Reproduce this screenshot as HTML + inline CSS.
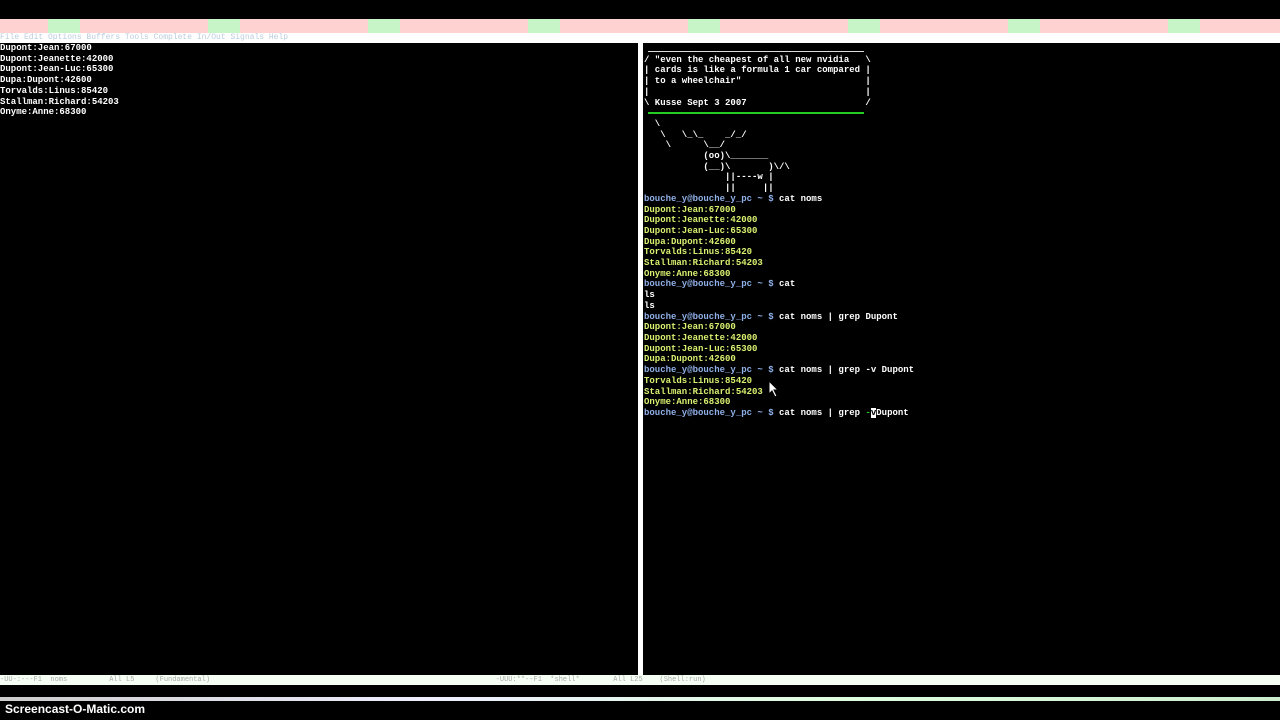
<!DOCTYPE html>
<html><head><style>
body{margin:0;width:1280px;height:720px;background:#000;overflow:hidden;position:relative;font-family:"Liberation Mono",monospace;}
.stripe{position:absolute;top:19px;left:0;width:1280px;height:14px;background:repeating-linear-gradient(90deg,#ffd2d2 0 48px,#c8f5c8 48px 80px,#ffd2d2 80px 160px);}
.menu{position:absolute;top:33px;left:0;width:1280px;height:10px;background:#fff;font-size:8px;line-height:10px;color:#bcd;white-space:pre;}
.div{position:absolute;left:638px;top:43px;width:5px;height:632px;background:#fff;}
pre{margin:0;position:absolute;font-family:"Liberation Mono",monospace;font-weight:bold;font-size:9px;line-height:10.7px;color:#fff;}
.y{color:#d8f070}.b{color:#8fb0e8}.g{color:#2c2}
.mode{position:absolute;top:675px;left:0;width:1280px;height:10px;background:#f6fff4;font-size:7px;line-height:10px;color:#aaa;white-space:pre;}
.bar{position:absolute;top:697px;left:0;width:1280px;height:4px;background:linear-gradient(90deg,#ccc,#eef,#dfd,#cec);}
.sc{position:absolute;top:702px;left:5px;font-family:"Liberation Sans",sans-serif;font-weight:bold;font-size:12px;color:#fff;}
.line{position:absolute;left:648px;width:216px;}
</style></head><body>
<div class="stripe"></div>
<div class="menu">File Edit Options Buffers Tools Complete In/Out Signals Help</div>
<div class="div"></div>
<div class="line" style="top:51px;height:1px;background:#ddd"></div>
<div class="line" style="top:112px;height:2px;background:#2c2"></div>
<pre style="left:0;top:43px">Dupont:Jean:67000
Dupont:Jeanette:42000
Dupont:Jean-Luc:65300
Dupa:Dupont:42600
Torvalds:Linus:85420
Stallman:Richard:54203
Onyme:Anne:68300</pre>
<pre style="left:644px;top:44px"> 
/ "even the cheapest of all new nvidia   \
| cards is like a formula 1 car compared |
| to a wheelchair"                       |
|                                        |
\ Kusse Sept 3 2007                      /
 
  \
   \   \_\_    _/_/
    \      \__/
           (oo)\_______
           (__)\       )\/\
               ||----w |
               ||     ||
<span class="b">bouche_y@bouche_y_pc ~ $</span> cat noms
<span class="y">Dupont:Jean:67000
Dupont:Jeanette:42000
Dupont:Jean-Luc:65300
Dupa:Dupont:42600
Torvalds:Linus:85420
Stallman:Richard:54203
Onyme:Anne:68300</span>
<span class="b">bouche_y@bouche_y_pc ~ $</span> cat
ls
ls
<span class="b">bouche_y@bouche_y_pc ~ $</span> cat noms | grep Dupont
<span class="y">Dupont:Jean:67000
Dupont:Jeanette:42000
Dupont:Jean-Luc:65300
Dupa:Dupont:42600</span>
<span class="b">bouche_y@bouche_y_pc ~ $</span> cat noms | grep -v Dupont
<span class="y">Torvalds:Linus:85420
Stallman:Richard:54203
Onyme:Anne:68300</span>
<span class="b">bouche_y@bouche_y_pc ~ $</span> cat noms | grep <span class="g">-</span><span style="background:#fff;color:#000">v</span>Dupont</pre>
<svg style="position:absolute;left:768px;top:380px" width="12" height="18"><path d="M1 1 L1 14 L4 11 L7 17 L9 16 L6 10 L10 10 Z" fill="#fff" stroke="#000" stroke-width="1"/></svg>
<div class="mode">-UU-:---F1  noms          All L5     (Fundamental)                                                                    -UUU:**--F1  *shell*        All L25    (Shell:run)</div>
<div class="bar"></div>
<div class="sc">Screencast-O-Matic.com</div>
</body></html>
